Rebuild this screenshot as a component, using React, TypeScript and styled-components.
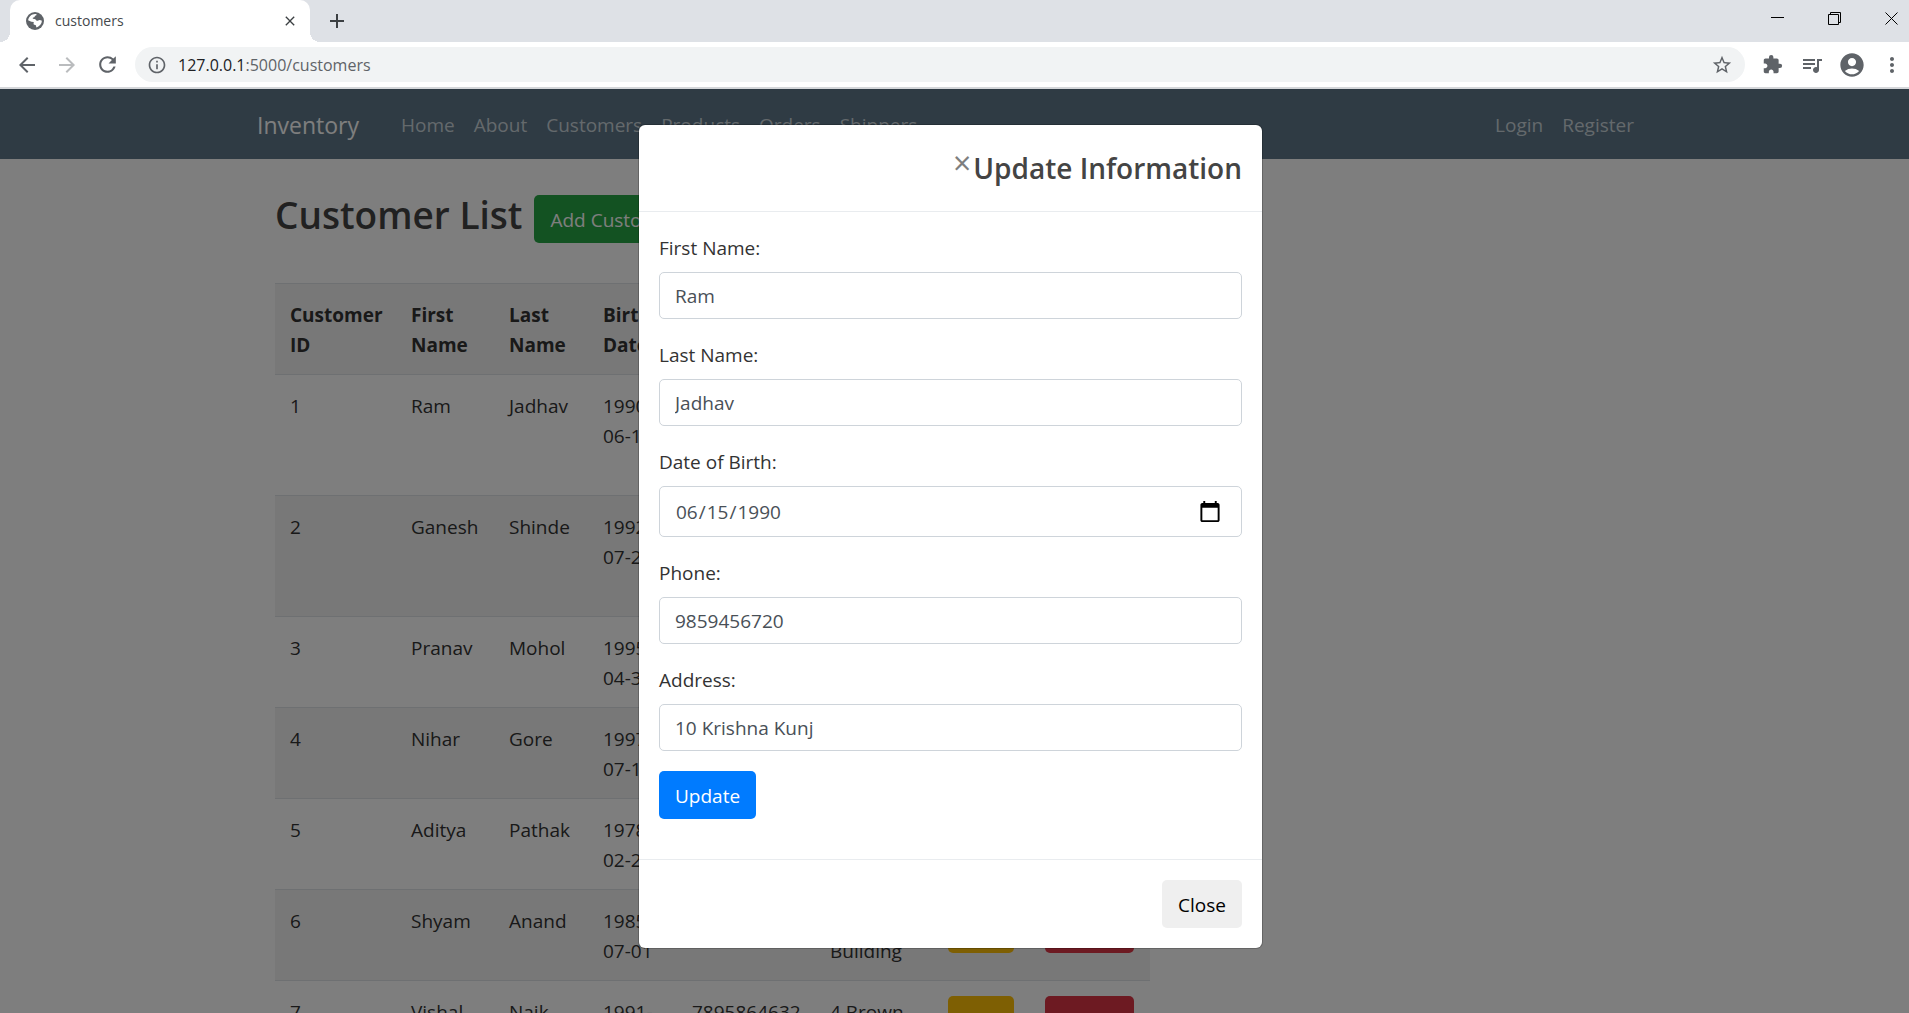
import React from "react";
import styled, { createGlobalStyle } from "styled-components";
import {
  MdAccountCircle,
  MdAdd,
  MdArrowBack,
  MdArrowForward,
  MdClose,
  MdExtension,
  MdInfoOutline,
  MdMoreVert,
  MdQueueMusic,
  MdRefresh,
  MdStarBorder,
} from "react-icons/md";

const GlobalStyle = createGlobalStyle`
  *, *::before, *::after { box-sizing: border-box; }
  body {
    margin: 0;
    background: #fff;
    color: #333;
    font-family: "Open Sans", "Noto Sans", sans-serif;
    font-size: 19px;
    line-height: 30px;
  }
  button, input { font: inherit; margin: 0; }
  button { cursor: pointer; }
  svg { display: block; flex: none; }
`;

/* ---------- browser frame ---------- */

const Window = styled.div`
  display: flex;
  flex-direction: column;
  height: 100vh;
  overflow: hidden;
`;

const TabStrip = styled.div`
  flex: none;
  display: flex;
  align-items: center;
  height: 42px;
  padding-left: 10px;
  background: #dee1e6;
`;

const Tab = styled.div`
  position: relative;
  display: flex;
  align-items: center;
  width: 300px;
  height: 42px;
  padding: 0 12px 0 16px;
  border-radius: 10px 10px 0 0;
  background: #fff;
  color: #5f6368;

  &::before, &::after {
    content: "";
    position: absolute;
    bottom: 0;
    width: 10px;
    height: 10px;
  }
  &::before {
    left: -10px;
    background: radial-gradient(circle at 0 0, transparent 10px, #fff 10px);
  }
  &::after {
    right: -10px;
    background: radial-gradient(circle at 100% 0, transparent 10px, #fff 10px);
  }
`;

const TabTitle = styled.span`
  flex: 1;
  margin-left: 11px;
  color: #45494d;
  font-size: 14px;
`;

const IconButton = styled.button<{ $size?: number; $color?: string }>`
  flex: none;
  display: flex;
  align-items: center;
  justify-content: center;
  width: ${(p) => p.$size ?? 40}px;
  height: ${(p) => p.$size ?? 40}px;
  padding: 0;
  border: 0;
  background: none;
  color: ${(p) => p.$color ?? "#5f6368"};
`;

const NewTab = styled(IconButton)`
  margin-left: 12px;
`;

const WindowControls = styled.div`
  display: flex;
  align-self: flex-start;
  gap: 17px;
  margin-left: auto;
  margin-right: -2px;
`;

const WindowButton = styled(IconButton)`
  height: 37px;
`;

const Toolbar = styled.div`
  flex: none;
  display: flex;
  align-items: center;
  height: 47px;
  margin-right: -3px;
  padding-left: 7px;
  border-bottom: 2px solid #d5d7da;
  background: #fff;
`;

const AddressBar = styled.div`
  flex: 1;
  display: flex;
  align-items: center;
  height: 35px;
  margin: 0 7px 0 8px;
  padding: 0 3px 0 12px;
  border-radius: 18px;
  background: #f1f3f4;
`;

const Url = styled.div`
  flex: 1;
  margin-left: 11px;
  font-size: 16px;
  color: #5f6368;
`;

const Host = styled.span`
  color: #202124;
`;

/* ---------- page ---------- */

const Page = styled.div`
  position: relative;
  flex: 1;
  overflow: hidden;
  background: #fff;
`;

const Navbar = styled.header`
  display: flex;
  justify-content: center;
  align-items: center;
  height: 70px;
  padding: 2px 8px 0 0;
  background: #5f788a;
`;

const NavInner = styled.div`
  display: flex;
  align-items: center;
  width: 100%;
  max-width: 1425px;
  padding: 0 20px 0 19px;
`;

const Brand = styled.a`
  margin-right: 32px;
  color: #fff;
  font-size: 23px;
  text-decoration: none;
`;

const NavLinks = styled.nav`
  display: flex;
`;

const UserLinks = styled(NavLinks)`
  margin-left: auto;
`;

const NavLink = styled.a`
  padding: 10px 9px 10px 10px;
  color: #cbd5db;
  text-decoration: none;
`;

const Main = styled.main`
  display: flex;
  justify-content: center;
  padding: 36px 8px 0 0;
`;

const Container = styled.div`
  width: 100%;
  max-width: 1425px;
  padding: 0 37px;
`;

const Column = styled.div`
  max-width: 875px;
`;

const TitleRow = styled.div`
  display: flex;
  align-items: flex-start;
  gap: 12px;
  height: 88px;
`;

const Title = styled.h1`
  margin: 0;
  color: #444;
  font-size: 37px;
  font-weight: 600;
  line-height: 40px;
`;

const tones = {
  success: ["#28a745", "#fff"],
  warning: ["#ffc107", "#212529"],
  danger: ["#dc3545", "#fff"],
  primary: ["#007bff", "#fff"],
  plain: ["#efefef", "#000"],
} as const;

const Button = styled.button<{ $tone: keyof typeof tones }>`
  height: 48px;
  padding: 2px 16px 0;
  border: 0;
  border-radius: 5px;
  background: ${(p) => tones[p.$tone][0]};
  color: ${(p) => tones[p.$tone][1]};
  white-space: nowrap;
`;

const Table = styled.table`
  width: 100%;
  table-layout: fixed;
  border-collapse: collapse;
`;

const Row = styled.tr`
  &:nth-child(even) {
    background: #f2f2f2;
  }
`;

const HeadRow = styled.tr`
  background: #f2f2f2;
`;

const HeadCell = styled.th`
  padding: 16px 15px 14px;
  border-top: 1px solid #dee2e6;
  text-align: left;
  vertical-align: top;
  font-weight: 700;
`;

const Cell = styled.td`
  padding: 16px 15px 14px;
  border-top: 1px solid #dee2e6;
  vertical-align: top;
`;

const ActionCell = styled(Cell)`
  padding: 15px 15px 14px;
`;

/* ---------- dialog ---------- */

const Backdrop = styled.div`
  position: absolute;
  inset: 0;
  padding: 36px 8px 0 0;
  background: rgba(0, 0, 0, 0.505);
`;

const Dialog = styled.div`
  max-width: 623px;
  margin: 0 auto;
  border-radius: 6px;
  background: #fff;
  box-shadow: 0 0 0 1px rgba(0, 0, 0, 0.2);
`;

const DialogHeader = styled.div`
  display: flex;
  justify-content: flex-end;
  align-items: flex-start;
  padding: 20px;
  border-bottom: 1px solid #e9ecef;
`;

const DismissButton = styled.button`
  padding: 8px 2px;
  border: 0;
  background: none;
  color: #000;
  font-size: 32px;
  line-height: 20px;
  opacity: 0.5;
`;

const DialogTitle = styled.h2`
  margin: 0;
  color: #444;
  font-size: 28px;
  font-weight: 600;
  line-height: 46px;
`;

const Form = styled.form`
  padding: 20px 20px 40px;
`;

const Field = styled.div`
  margin-bottom: 20px;
`;

const Label = styled.label`
  display: block;
  margin-bottom: 8px;
  line-height: 32px;
`;

const Input = styled.input`
  display: block;
  width: 100%;
  height: 47px;
  padding: 0 15px;
  border: 1px solid #ced4da;
  border-radius: 5px;
  background: #fff;
  color: #495057;

  &[type="date"] {
    height: 51px;
  }
  &::-webkit-calendar-picker-indicator {
    width: 24px;
    height: 24px;
    margin-right: 4px;
    padding: 0;
  }
`;

const DialogFooter = styled.div`
  display: flex;
  justify-content: flex-end;
  padding: 20px;
  border-top: 1px solid #e9ecef;
`;

const navItems = ["Home", "About", "Customers", "Products", "Orders", "Shippers"];

const columns = [
  { label: "Customer ID", width: 121 },
  { label: "First Name", width: 98 },
  { label: "Last Name", width: 94 },
  { label: "Birth Date", width: 89 },
  { label: "Phone", width: 138 },
  { label: "Address", width: 118 },
  { label: "", width: 97 },
  { label: "", width: 120 },
];

const customers = [
  [1, "Ram", "Jadhav", "1990-06-15", "9859456720", "10 Krishna Kunj"],
  [2, "Ganesh", "Shinde", "1992-07-21", "9859456721", "12 Krishna Kunj"],
  [3, "Pranav", "Mohol", "1995-04-30", "9859456723", "3 Brown Building"],
  [4, "Nihar", "Gore", "1997-07-12", "9859456724", "6 Brown Building"],
  [5, "Aditya", "Pathak", "1978-02-23", "9859456725", "7 Brown Building"],
  [6, "Shyam", "Anand", "1985-07-01", "9859456726", "9 Brown Building"],
  [7, "Vishal", "Naik", "1991-03-11", "7895864632", "4 Brown Building"],
];

const fields = [
  { id: "first", label: "First Name:", type: "text", value: "Ram" },
  { id: "last", label: "Last Name:", type: "text", value: "Jadhav" },
  { id: "birth", label: "Date of Birth:", type: "date", value: "1990-06-15" },
  { id: "phone", label: "Phone:", type: "text", value: "9859456720" },
  { id: "address", label: "Address:", type: "text", value: "10 Krishna Kunj" },
];

function GlobeIcon() {
  return (
    <svg width="18" height="18" viewBox="0 0 18 18">
      <circle cx="9" cy="9" r="9" fill="#5f6368" />
      <path
        d="M10.500 2.200c.4.900-.4 1.300-1.300 1.600-.6.300-.3 1.100-1 1.500-.6.400-1.500.2-1.500 1 0 .7.900.6 1.800.6 1.500 0 1.400 1.800 2.600 1.900 1 .1 1.300-.8 2.300-.8.900 0 1.800.3 2.500.8-.1 3-2.300 5.700-5.200 6.600-.9-.3-.3-1.500-.9-2.100-.6-.7-2.100-.4-2.300-1.400-.1-.7.500-1 .3-1.500-.3-.7-1.500-.5-2.500-.7L2.100 8.300c.2-1.700.9-3.200 2.200-4.400 1.700-1.500 4-2.200 6.200-1.700z"
        fill="#fff"
      />
    </svg>
  );
}

function BrowserFrame() {
  return (
    <>
      <TabStrip>
        <Tab>
          <GlobeIcon />
          <TabTitle>customers</TabTitle>
          <IconButton $size={16} $color="#3c4043" aria-label="Close tab">
            <MdClose size={16} />
          </IconButton>
        </Tab>
        <NewTab $size={30} $color="#3c4043" aria-label="New tab">
          <MdAdd size={24} />
        </NewTab>
        <WindowControls>
          <WindowButton $color="#000" aria-label="Minimize">
            <svg width="13" height="13" viewBox="0 0 13 13">
              <path d="M0 5.5h13" stroke="currentColor" />
            </svg>
          </WindowButton>
          <WindowButton $color="#000" aria-label="Restore">
            <svg width="13" height="13" viewBox="0 0 13 13" fill="none" stroke="currentColor">
              <path d="M.5 2.5h10v10H.5zM2.500 2.500v-2h10v10h-2" />
            </svg>
          </WindowButton>
          <WindowButton $color="#000" aria-label="Close window">
            <svg width="13" height="13" viewBox="0 0 13 13">
              <path d="M.5.5l12 12M12.500.5l-12 12" stroke="currentColor" />
            </svg>
          </WindowButton>
        </WindowControls>
      </TabStrip>
      <Toolbar>
        <IconButton aria-label="Back">
          <MdArrowBack size={24} />
        </IconButton>
        <IconButton $color="#babcbe" aria-label="Forward">
          <MdArrowForward size={24} />
        </IconButton>
        <IconButton aria-label="Reload">
          <MdRefresh size={25} />
        </IconButton>
        <AddressBar>
          <MdInfoOutline size={20} color="#5f6368" />
          <Url>
            <Host>127.0.0.1</Host>:5000/customers
          </Url>
          <IconButton aria-label="Bookmark">
            <MdStarBorder size={22} />
          </IconButton>
        </AddressBar>
        <IconButton aria-label="Extensions">
          <MdExtension size={21} />
        </IconButton>
        <IconButton aria-label="Media">
          <MdQueueMusic size={24} />
        </IconButton>
        <IconButton aria-label="Profile">
          <MdAccountCircle size={28} />
        </IconButton>
        <IconButton aria-label="Menu">
          <MdMoreVert size={24} />
        </IconButton>
      </Toolbar>
    </>
  );
}

function CustomerTable() {
  return (
    <Table>
      <colgroup>
        {columns.map((c, i) => (
          <col key={i} width={c.width} />
        ))}
      </colgroup>
      <thead>
        <HeadRow>
          {columns.map((c, i) => (
            <HeadCell key={i}>{c.label}</HeadCell>
          ))}
        </HeadRow>
      </thead>
      <tbody>
        {customers.map((row) => (
          <Row key={row[0]}>
            {row.map((value, i) => (
              <Cell key={i}>{value}</Cell>
            ))}
            <ActionCell>
              <Button $tone="warning">Edit</Button>
            </ActionCell>
            <ActionCell>
              <Button $tone="danger">Delete</Button>
            </ActionCell>
          </Row>
        ))}
      </tbody>
    </Table>
  );
}

function UpdateDialog() {
  return (
    <Backdrop>
      <Dialog role="dialog" aria-labelledby="dialog-title">
        <DialogHeader>
          <DismissButton aria-label="Dismiss">×</DismissButton>
          <DialogTitle id="dialog-title">Update Information</DialogTitle>
        </DialogHeader>
        <Form onSubmit={(e) => e.preventDefault()}>
          {fields.map((f) => (
            <Field key={f.id}>
              <Label htmlFor={f.id}>{f.label}</Label>
              <Input id={f.id} type={f.type} defaultValue={f.value} />
            </Field>
          ))}
          <Button $tone="primary" type="submit">
            Update
          </Button>
        </Form>
        <DialogFooter>
          <Button $tone="plain">Close</Button>
        </DialogFooter>
      </Dialog>
    </Backdrop>
  );
}

export default function App() {
  return (
    <Window>
      <GlobalStyle />
      <BrowserFrame />
      <Page>
        <Navbar>
          <NavInner>
            <Brand href="#">Inventory</Brand>
            <NavLinks>
              {navItems.map((item) => (
                <NavLink key={item} href="#">
                  {item}
                </NavLink>
              ))}
            </NavLinks>
            <UserLinks>
              <NavLink href="#">Login</NavLink>
              <NavLink href="#">Register</NavLink>
            </UserLinks>
          </NavInner>
        </Navbar>
        <Main>
          <Container>
            <Column>
              <TitleRow>
                <Title>Customer List</Title>
                <Button $tone="success">Add Customer</Button>
              </TitleRow>
              <CustomerTable />
            </Column>
          </Container>
        </Main>
        <UpdateDialog />
      </Page>
    </Window>
  );
}
